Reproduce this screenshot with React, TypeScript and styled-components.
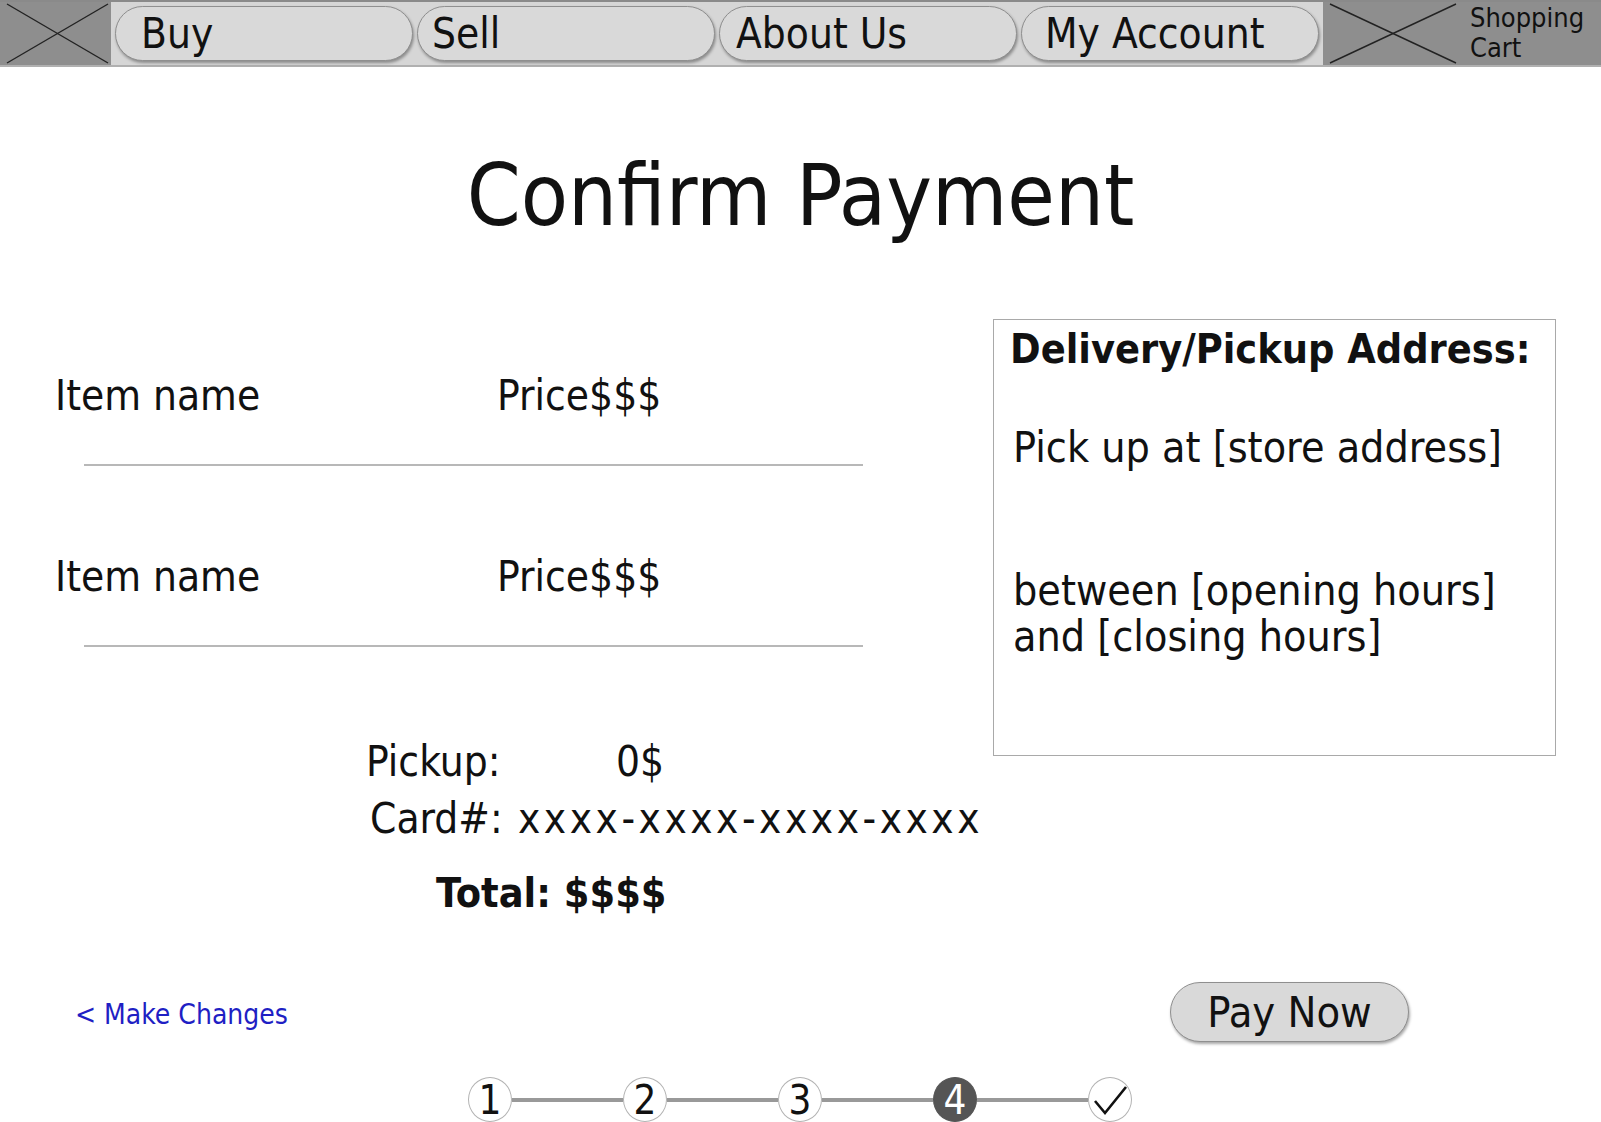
import React from "react";
import styled, { createGlobalStyle } from "styled-components";

const FONT = `"DejaVu Sans Condensed", "DejaVu Sans", sans-serif`;

const Global = createGlobalStyle`
  html, body { margin: 0; padding: 0; background: #fff; overflow: hidden; }
  body { font-family: ${FONT}; font-stretch: condensed; color: #111; }
  * { box-sizing: border-box; }
`;

const Page = styled.div`
  width: 1601px;
  height: 1122px;
  display: flex;
  flex-direction: column;
`;

const NavBar = styled.nav`
  display: flex;
  align-items: center;
  gap: 4px;
  height: 67px;
  background: #d6d6d6;
  border-top: 2px solid #8a8a8a;
  border-bottom: 2px solid #b0b0b0;
`;

const XBox = styled.div<{ $w: number }>`
  width: ${(p) => p.$w}px;
  height: 100%;
  background: #8e8e8e;
  flex: none;
  display: flex;
`;

const NavButton = styled.a<{ $pad: number }>`
  flex: none;
  width: 298px;
  height: 55px;
  border-radius: 28px;
  border: 1px solid #8f8f8f;
  background: #d9d9d9;
  box-shadow: 1px 2px 3px rgba(0, 0, 0, 0.35);
  display: flex;
  align-items: center;
  padding-left: ${(p) => p.$pad}px;
  font-size: 42px;
  line-height: 1;
  color: #111;
`;

const Cart = styled.div`
  flex: 1;
  height: 100%;
  background: #8e8e8e;
  display: flex;
  align-items: center;
`;

const CartText = styled.div`
  font-size: 27px;
  line-height: 30px;
  color: #111;
  padding-left: 11px;
  margin-top: -2px;
`;

const Cross = ({ w }: { w: number }) => (
  <svg width={w} height="63" viewBox={`0 0 ${w} 63`}>
    <line x1="7" y1="61" x2={w - 3} y2="2" stroke="#222" strokeWidth="1.4" />
    <line x1="7" y1="2" x2={w - 3} y2="61" stroke="#222" strokeWidth="1.4" />
  </svg>
);

const Title = styled.h1`
  margin: 85px 0 0;
  font-size: 86px;
  font-weight: normal;
  line-height: 1;
  text-align: center;
  color: #111;
`;

const Content = styled.div`
  display: grid;
  grid-template-columns: 993px 563px;
  margin-top: 81px;
  align-items: start;
`;

const LeftCol = styled.div`
  display: flex;
  flex-direction: column;
`;

const ItemRow = styled.div<{ $top: number }>`
  display: flex;
  margin-top: ${(p) => p.$top}px;
  padding-left: 55px;
  font-size: 42px;
  line-height: 1;
`;

const ItemName = styled.span`
  width: 442px;
`;

const Divider = styled.div`
  margin: 47px 0 0 84px;
  width: 779px;
  height: 2px;
  background: #b8b8b8;
`;

const SummaryRow = styled.div<{ $top: number; $left: number; $labelW: number }>`
  display: flex;
  margin-top: ${(p) => p.$top}px;
  padding-left: ${(p) => p.$left}px;
  font-size: 42px;
  line-height: 1;
  & > span:first-child {
    width: ${(p) => p.$labelW}px;
  }
`;

const CardValue = styled.span`
  letter-spacing: 3.5px;
`;

const TotalRow = styled.div`
  margin-top: 33px;
  padding-left: 436px;
  font-size: 41px;
  font-weight: bold;
  line-height: 1;
`;

const AddressBox = styled.div`
  height: 437px;
  border: 1px solid #a9a9a9;
  padding: 9px 0 0 16px;
`;

const AddressHead = styled.div`
  font-size: 41px;
  font-weight: bold;
  line-height: 1;
`;

const AddressText = styled.div<{ $top: number }>`
  margin-top: ${(p) => p.$top}px;
  padding-left: 3px;
  font-size: 42.6px;
  line-height: 46px;
`;

const Footer = styled.div`
  display: flex;
  align-items: center;
  justify-content: space-between;
  margin-top: 68px;
  padding: 0 192px 0 75px;
  height: 60px;
`;

const BackLink = styled.a`
  color: #1f1fc4;
  font-size: 28px;
  line-height: 1;
  margin-top: 6px;
  cursor: pointer;
`;

const PayButton = styled.button`
  width: 239px;
  height: 60px;
  border-radius: 30px;
  border: 1px solid #8f8f8f;
  background: #d9d9d9;
  box-shadow: 1px 2px 3px rgba(0, 0, 0, 0.35);
  font-family: ${FONT};
  font-stretch: condensed;
  font-size: 43px;
  line-height: 1;
  color: #111;
  padding: 0;
`;

const Stepper = styled.div`
  display: flex;
  align-items: center;
  margin: 35px 0 0 468px;
`;

const Step = styled.div<{ $active?: boolean }>`
  width: 44px;
  height: 45px;
  flex: none;
  border-radius: 50%;
  border: 1.5px solid ${(p) => (p.$active ? "#555" : "#b3b3b3")};
  background: ${(p) => (p.$active ? "#555" : "#fff")};
  color: ${(p) => (p.$active ? "#fff" : "#111")};
  display: flex;
  align-items: center;
  justify-content: center;
  font-size: 40px;
  line-height: 1;
`;

const Connector = styled.div`
  width: 111px;
  height: 4px;
  background: #999;
  flex: none;
`;

export default function App() {
  return (
    <Page>
      <Global />
      <NavBar>
        <XBox $w={111}>
          <Cross w={111} />
        </XBox>
        <NavButton $pad={25}>Buy</NavButton>
        <NavButton $pad={14}>Sell</NavButton>
        <NavButton $pad={16}>About Us</NavButton>
        <NavButton $pad={23}>My Account</NavButton>
        <Cart>
          <Cross w={136} />
          <CartText>
            Shopping
            <br />
            Cart
          </CartText>
        </Cart>
      </NavBar>

      <Title>Confirm Payment</Title>

      <Content>
        <LeftCol>
          <ItemRow $top={56}>
            <ItemName>Item name</ItemName>
            <span>Price$$$</span>
          </ItemRow>
          <Divider />
          <ItemRow $top={90}>
            <ItemName>Item name</ItemName>
            <span>Price$$$</span>
          </ItemRow>
          <Divider />
          <SummaryRow $top={94} $left={366} $labelW={250}>
            <span>Pickup:</span>
            <span>0$</span>
          </SummaryRow>
          <SummaryRow $top={15} $left={370} $labelW={148}>
            <span>Card#:</span>
            <CardValue>xxxx-xxxx-xxxx-xxxx</CardValue>
          </SummaryRow>
          <TotalRow>Total: $$$$</TotalRow>
        </LeftCol>
        <AddressBox>
          <AddressHead>Delivery/Pickup Address:</AddressHead>
          <AddressText $top={54}>Pick up at [store address]</AddressText>
          <AddressText $top={97}>
            between [opening hours]
            <br />
            and [closing hours]
          </AddressText>
        </AddressBox>
      </Content>

      <Footer>
        <BackLink>&lt; Make Changes</BackLink>
        <PayButton>Pay Now</PayButton>
      </Footer>

      <Stepper>
        <Step>1</Step>
        <Connector />
        <Step>2</Step>
        <Connector />
        <Step>3</Step>
        <Connector />
        <Step $active>4</Step>
        <Connector />
        <Step>
          <svg width="36" height="32" viewBox="0 0 36 32">
            <polyline points="3,17 13,29 34,3" fill="none" stroke="#111" strokeWidth="2.6" />
          </svg>
        </Step>
      </Stepper>
    </Page>
  );
}
